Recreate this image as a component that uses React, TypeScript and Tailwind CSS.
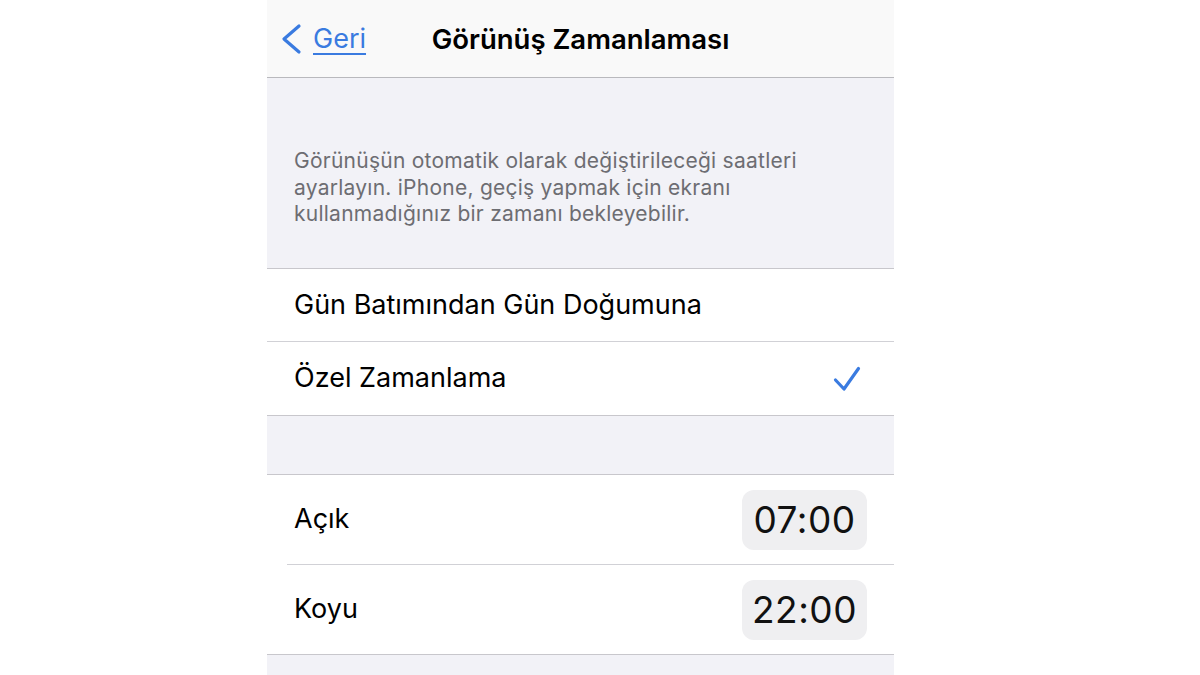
const font = { fontFamily: "Inter, 'Noto Sans', sans-serif" };

const TimePill = ({ value }: { value: string }) => (
  <div className="w-[125px] h-[60px] rounded-[12px] bg-[#efeff1] flex items-center justify-center text-[37px] text-[#111] tracking-[0.5px]">
    {value}
  </div>
);

const App = () => {
  return (
    <div className="w-[1200px] h-[675px] bg-white flex pl-[267px] overflow-hidden" style={font}>
      <div className="w-[627px] flex flex-col bg-[#f2f2f7]">
        {/* nav bar */}
        <div className="h-[78px] shrink-0 bg-[#f9f9f9] border-b border-[#b9b9bd] relative flex items-center justify-center">
          <div className="absolute left-[14px] top-0 h-full flex items-center text-[#3a7be0]">
            <svg width="22" height="32" viewBox="0 0 22 32" fill="none">
              <path d="M18 3 L3 16 L18 29" stroke="#3a7be0" strokeWidth="3.2" strokeLinecap="round" strokeLinejoin="round" />
            </svg>
            <span className="text-[27px] underline underline-offset-[5px] decoration-[1.5px] ml-[10px] mt-[1px]">Geri</span>
          </div>
          <h1 className="text-[27.5px] font-semibold text-black mt-[2px]">Görünüş Zamanlaması</h1>
        </div>

        {/* description */}
        <div className="h-[190px] shrink-0 pl-[27px] pr-6 pt-[70px] text-[21px] leading-[26.5px] text-[#6d6d72] tracking-[0.25px]">
          Görünüşün otomatik olarak değiştirileceği saatleri
          <br />
          ayarlayın. iPhone, geçiş yapmak için ekranı
          <br />
          kullanmadığınız bir zamanı bekleyebilir.
        </div>

        {/* schedule options */}
        <div className="bg-white border-y border-[#c8c7cc] shrink-0">
          <div className="h-[73px] flex items-center pl-[27px] text-[27px] text-black border-b border-[#d1d1d6]">
            Gün Batımından Gün Doğumuna
          </div>
          <div className="h-[73px] flex items-center justify-between pl-[27px] pr-[33px] text-[27px] text-black">
            <span>Özel Zamanlama</span>
            <svg width="28" height="26" viewBox="0 0 28 26" fill="none">
              <path d="M2.5 14 L11 23 L25.5 2.5" stroke="#3a7be0" strokeWidth="3.2" strokeLinecap="round" strokeLinejoin="round" />
            </svg>
          </div>
        </div>

        <div className="h-[58px] shrink-0" />

        {/* times */}
        <div className="bg-white border-y border-[#c8c7cc] shrink-0">
          <div className="h-[89px] flex items-center justify-between pl-[27px] pr-[27px]">
            <span className="text-[27px] text-black">Açık</span>
            <TimePill value="07:00" />
          </div>
          <div className="ml-[20px] border-t border-[#d1d1d6]" />
          <div className="h-[89px] flex items-center justify-between pl-[27px] pr-[27px]">
            <span className="text-[27px] text-black">Koyu</span>
            <TimePill value="22:00" />
          </div>
        </div>

        <div className="flex-1" />
      </div>
    </div>
  );
};

export default App;
